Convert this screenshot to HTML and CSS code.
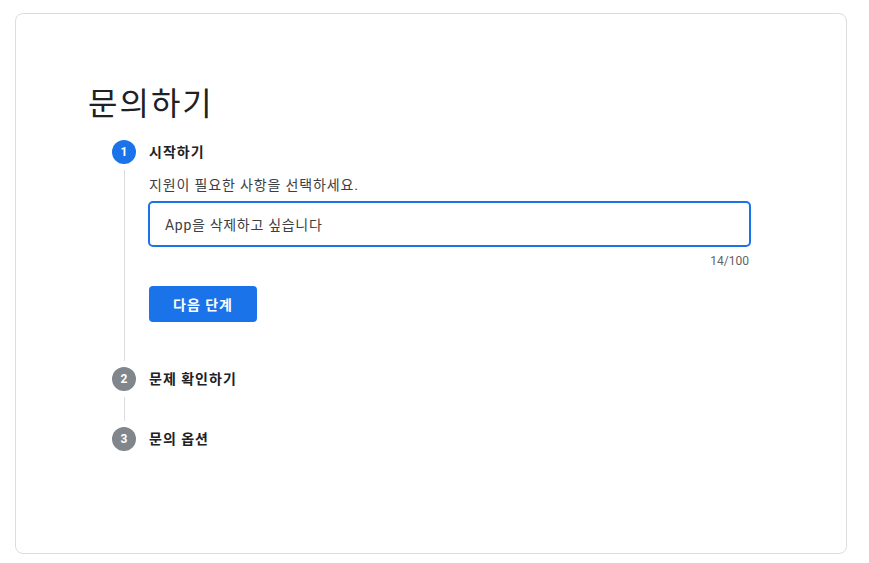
FILE: index.html
```html
<!DOCTYPE html>
<html lang="ko">
<head>
<meta charset="utf-8">
<title>문의하기</title>
<link rel="stylesheet" href="styles.css">
</head>
<body>
<main class="card">
  <h1 class="title">문의하기</h1>
  <ol class="stepper">
    <li class="step active">
      <span class="badge">1</span>
      <span class="label">시작하기</span>
      <span class="rail"></span>
      <div class="content">
        <p class="desc">지원이 필요한 사항을 선택하세요.</p>
        <div class="field">
          <div class="input">App을 삭제하고 싶습니다</div>
          <div class="counter">14/100</div>
        </div>
        <button class="next" type="button">다음 단계</button>
      </div>
    </li>
    <li class="step">
      <span class="badge">2</span>
      <span class="label">문제 확인하기</span>
      <span class="rail"></span>
      <div class="content empty"></div>
    </li>
    <li class="step last">
      <span class="badge">3</span>
      <span class="label">문의 옵션</span>
    </li>
  </ol>
</main>
</body>
</html>
```

FILE: styles.css
```css
* { box-sizing: border-box; }

html, body { background: #ffffff; }

body {
  margin: 13px 22px 0 15px;
  font-family: Roboto, "Noto Sans CJK KR", "Noto Sans", sans-serif;
  color: #202124;
}

.card {
  height: 541px;
  border: 1px solid #dadce0;
  border-radius: 8px;
  padding: 70px 0 0 72px;
}

.title {
  margin: 0;
  font-size: 32px;
  font-weight: 400;
  line-height: 40px;
  letter-spacing: 2px;
  color: #202124;
}

.stepper {
  list-style: none;
  margin: 16px 0 0 24px;
  padding: 0;
}

.step {
  display: grid;
  grid-template-columns: 24px 1fr;
  column-gap: 13px;
  align-items: center;
}

.badge {
  width: 24px;
  height: 24px;
  border-radius: 50%;
  background: #80868b;
  color: #ffffff;
  font-size: 12px;
  font-weight: 700;
  display: flex;
  align-items: center;
  justify-content: center;
  line-height: 1;
}

.step.active .badge { background: #1a73e8; }

.label {
  font-size: 14px;
  font-weight: 700;
  line-height: 20px;
  letter-spacing: 1px;
  color: #202124;
}

.rail {
  align-self: stretch;
  justify-self: center;
  width: 1px;
  margin: 6px 0;
  background: #dadce0;
}

.content {
  align-self: start;
  padding: 11px 0 45px;
}

.content.empty {
  padding: 0;
  height: 36px;
}

.desc {
  margin: 0;
  font-size: 14px;
  line-height: 20px;
  letter-spacing: 0.85px;
  color: #3c4043;
}

.field {
  width: 603px;
  margin: 6px 0 0 -1px;
}

.input {
  height: 46px;
  border: 2px solid #1a73e8;
  border-radius: 5px;
  padding: 0 15px;
  display: flex;
  align-items: center;
  font-size: 14px;
  letter-spacing: 0.7px;
  color: #3c4043;
}

.counter {
  margin-top: 6px;
  padding-right: 2px;
  text-align: right;
  font-size: 12px;
  line-height: 16px;
  color: #5f6368;
}

.next {
  margin-top: 17px;
  height: 36px;
  padding: 0 24px;
  border: none;
  border-radius: 4px;
  background: #1a73e8;
  color: #ffffff;
  font-family: Roboto, "Noto Sans CJK KR", sans-serif;
  font-size: 14px;
  font-weight: 700;
  letter-spacing: 1px;
}
```
